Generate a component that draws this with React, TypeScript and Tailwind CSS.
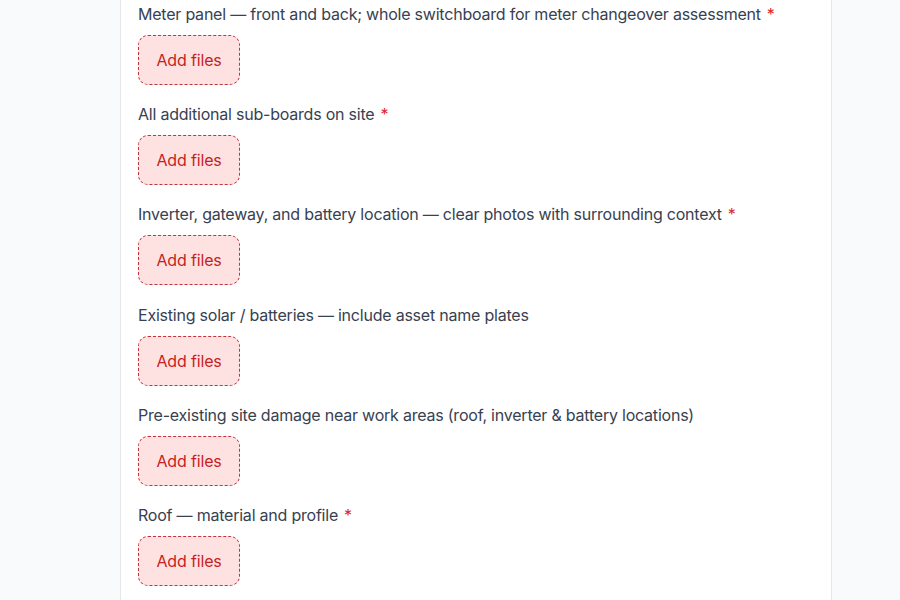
const items: { label: string; required: boolean }[] = [
  { label: "Meter panel — front and back; whole switchboard for meter changeover assessment", required: true },
  { label: "All additional sub-boards on site", required: true },
  { label: "Inverter, gateway, and battery location — clear photos with surrounding context", required: true },
  { label: "Existing solar / batteries — include asset name plates", required: false },
  { label: "Pre-existing site damage near work areas (roof, inverter & battery locations)", required: false },
  { label: "Roof — material and profile", required: true },
];

export default function App() {
  return (
    <div className="min-h-screen h-[600px] overflow-hidden bg-[#f9fafb] font-['Inter','Noto_Sans',sans-serif]">
      <div className="ml-[120px] w-[712px] h-full bg-white border-x border-[#e5e7eb] pl-[17px] pt-[2px]">
        <div className="flex flex-col gap-[17.2px]">
          {items.map((it) => (
            <div key={it.label} className="flex flex-col items-start">
              <label className="text-[16px] leading-6 tracking-[-0.22px] text-[#374151]">
                {it.label}
                {it.required && <span className="ml-[6px] text-[#dc2626]">*</span>}
              </label>
              <button className="mt-[9px] w-[102px] h-[50px] flex items-center justify-center rounded-[10px] border-[1.5px] border-dashed border-[#c2343d] bg-[#fee2e2] text-[16px] tracking-[-0.15px] text-[#c81e1e]">
                Add files
              </button>
            </div>
          ))}
        </div>
      </div>
    </div>
  );
}
